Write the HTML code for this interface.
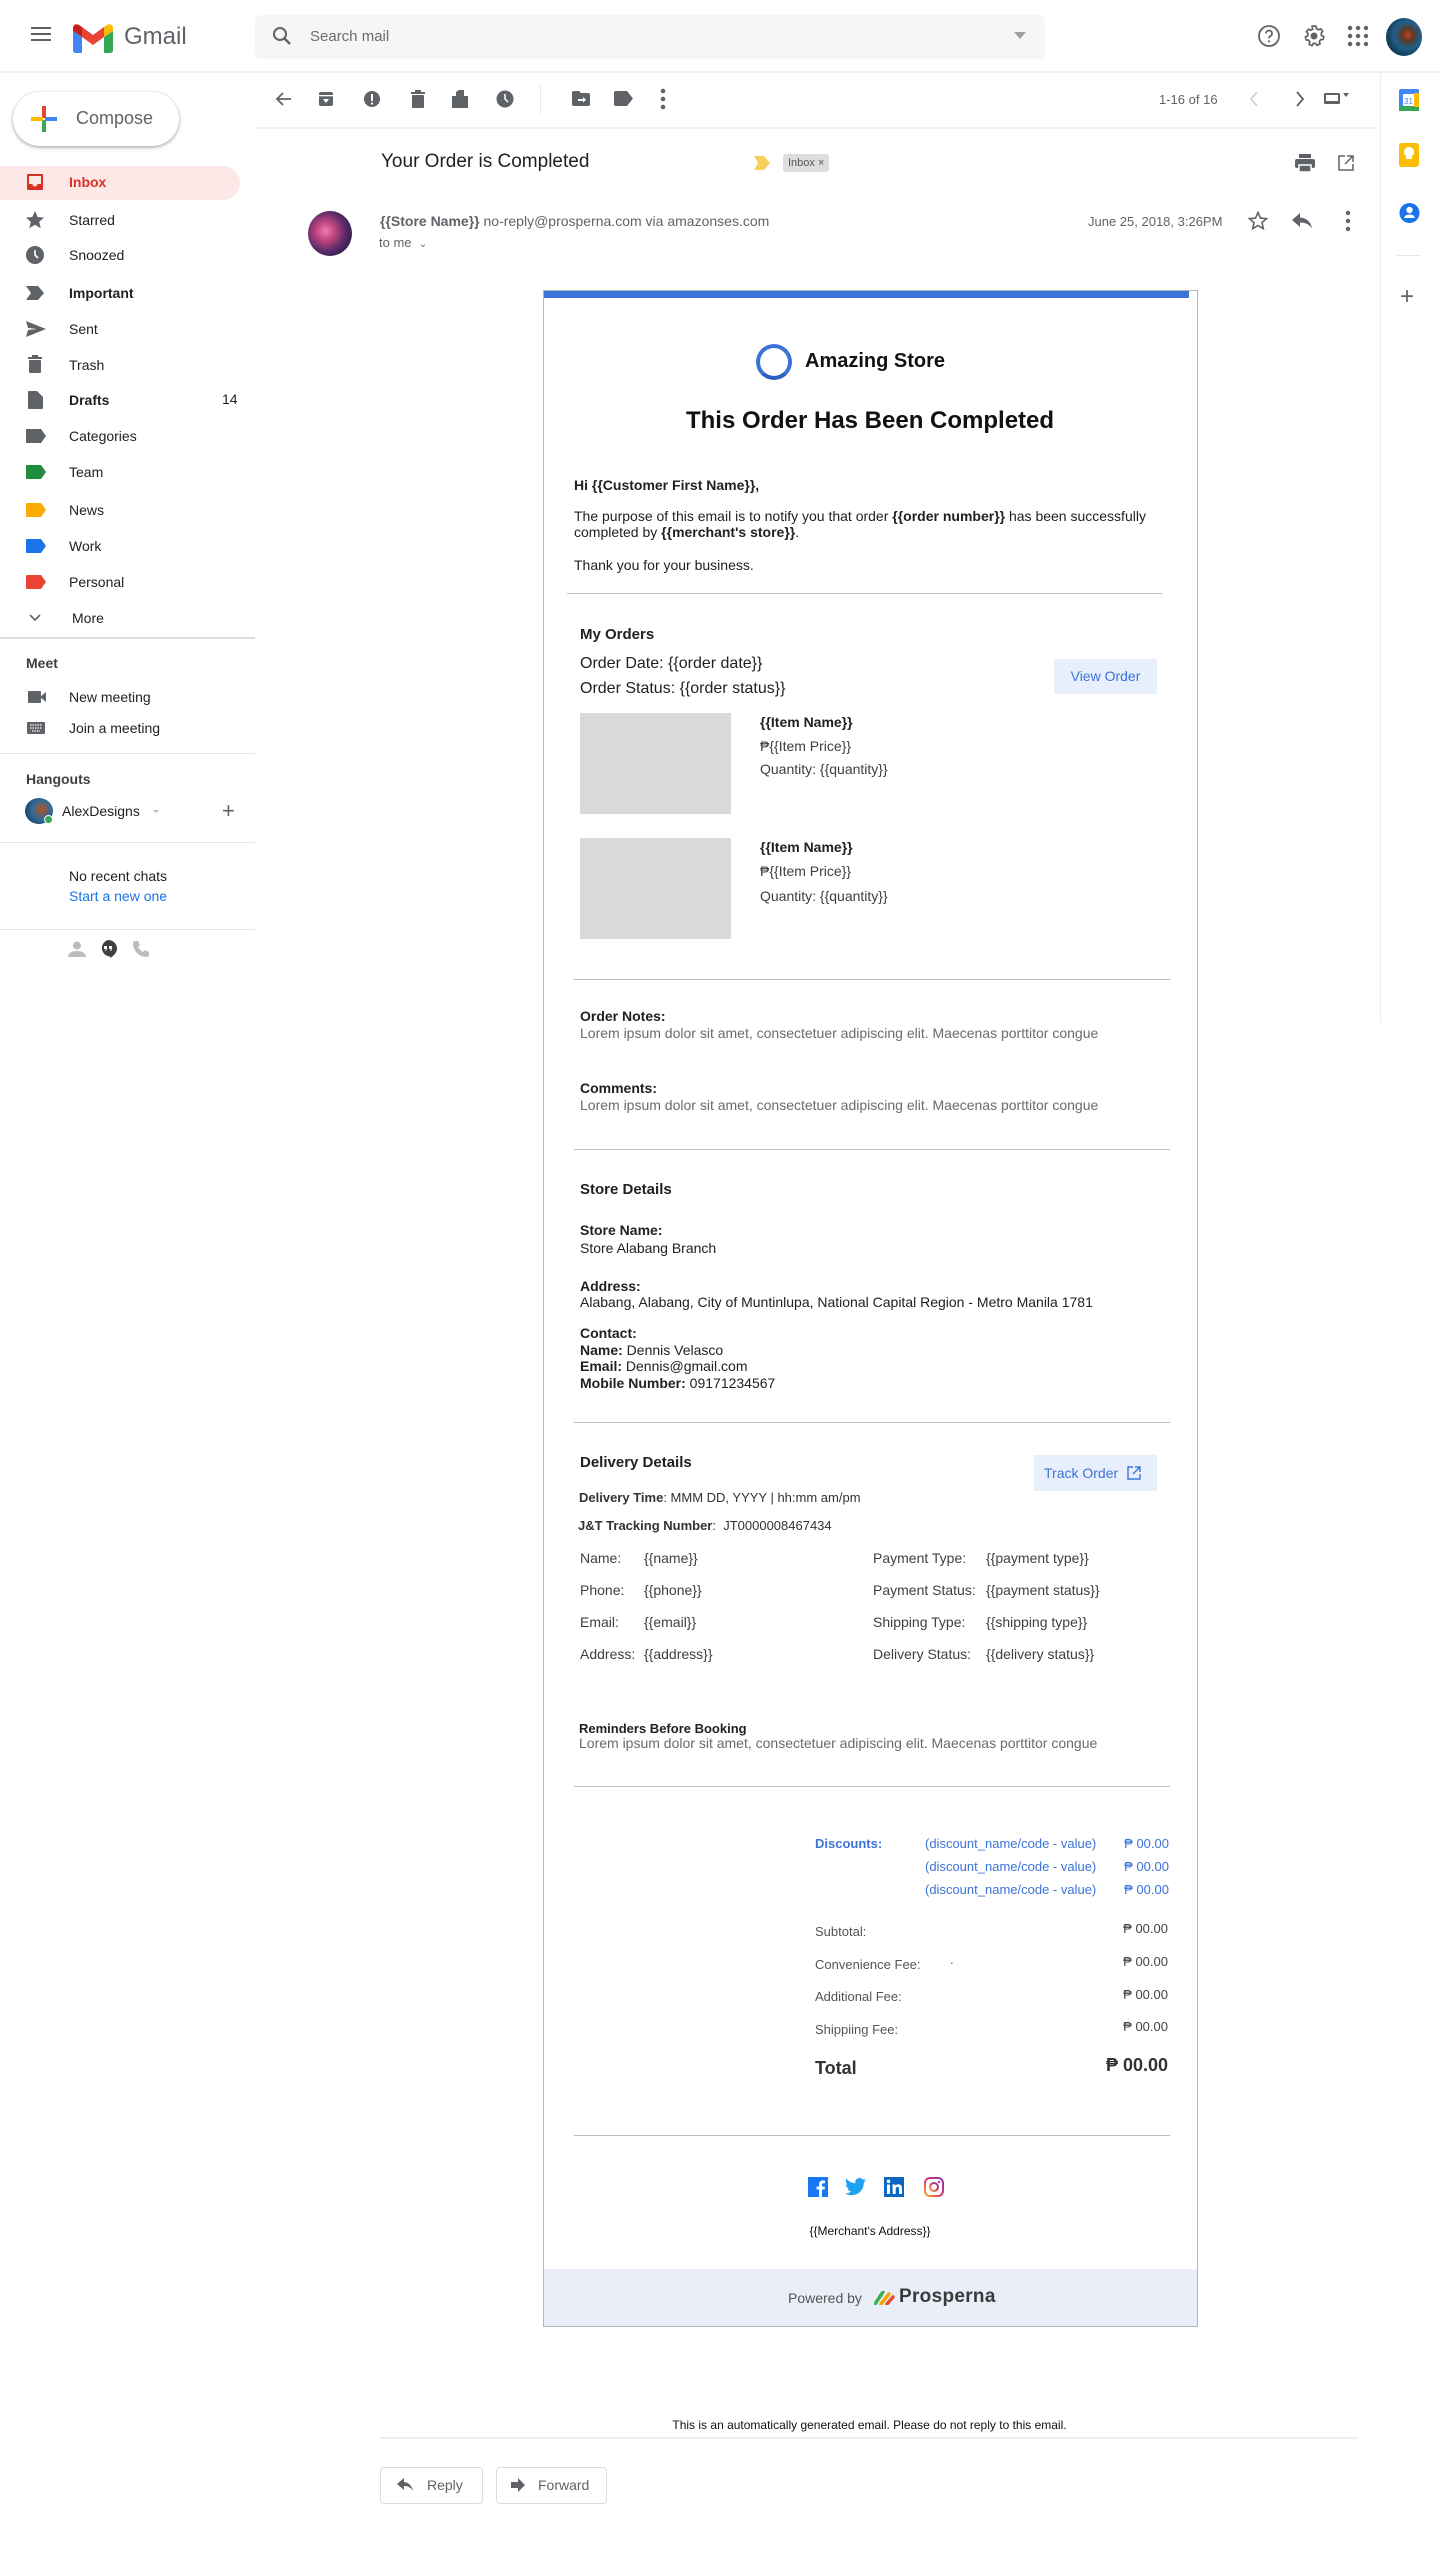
<!DOCTYPE html>
<html><head><meta charset="utf-8">
<style>
*{box-sizing:border-box;margin:0;padding:0}
body{width:1440px;height:2567px;position:relative;background:#fff;font-family:"Liberation Sans","DejaVu Sans",sans-serif;color:#202124;overflow:hidden}
.a{position:absolute;white-space:nowrap}
.nav{position:absolute;left:69px;font-size:14px;color:#202124;line-height:18px}
.ic{position:absolute}
.g{color:#5f6368}
.e{font-size:14px;line-height:17px}
.b{font-weight:bold}
.hr{position:absolute;height:1px;background:#bdbdbd}
.lab{color:#3c4043}
</style></head><body>

<!-- header -->
<div class="a" style="left:31px;top:27px;width:20px;height:2px;background:#5f6368;box-shadow:0 6px 0 #5f6368,0 12px 0 #5f6368"></div>
<svg class="ic" style="left:73px;top:23px" width="40" height="30" viewBox="0 0 40 30"><path d="M3 29V6l17 13L37 6v23" fill="none" stroke="#ea4335" stroke-width="0"/><path d="M0 8v19c0 1.5 1 3 3 3h6V14z" fill="#4285f4"/><path d="M31 30h6c2 0 3-1.5 3-3V8l-9 6z" fill="#34a853"/><path d="M9 14L20 22 31 14V4L20 12 9 4z" fill="#ea4335"/><path d="M0 8l9 6V4L6 2C3 0 0 2 0 5z" fill="#c5221f"/><path d="M31 4v10l9-6V5c0-3-3-5-6-3z" fill="#fbbc04"/></svg>
<div class="a" style="left:124px;top:23px;font-size:24px;color:#5f6368">Gmail</div>
<div class="a" style="left:255px;top:15px;width:790px;height:44px;background:#f6f6f6;border-radius:6px"></div>
<svg class="ic" style="left:272px;top:26px" width="20" height="20" viewBox="0 0 20 20"><circle cx="8" cy="8" r="6" fill="none" stroke="#5f6368" stroke-width="2"/><path d="M12.5 12.5L18 18" stroke="#5f6368" stroke-width="2.4"/></svg>
<div class="a" style="left:310px;top:28px;font-size:15px;color:#6b6b6b">Search mail</div>
<div class="a" style="left:1014px;top:32px;border-left:6px solid transparent;border-right:6px solid transparent;border-top:7px solid #9aa0a6"></div>
<svg class="ic" style="left:1257px;top:24px" width="24" height="24" viewBox="0 0 24 24"><circle cx="12" cy="12" r="10" fill="none" stroke="#5f6368" stroke-width="1.8"/><path d="M9 9.5a3 3 0 1 1 4 2.8c-.8.4-1 1-1 2" fill="none" stroke="#5f6368" stroke-width="1.8"/><circle cx="12" cy="17.3" r="1.1" fill="#5f6368"/></svg>
<svg class="ic" style="left:1302px;top:24px" width="24" height="24" viewBox="0 0 24 24"><path d="M12 2l2 .3.5 2.5 1.8 1 2.4-1 2 2.5-1.5 2 .3 2.2 2.3 1-.7 3-2.5.2-1.2 1.8.6 2.4-2.8 1.4-1.7-1.9h-2.1L10 21.7l-2.8-1.4.6-2.4-1.2-1.8-2.5-.2-.7-3 2.3-1 .3-2.2-1.5-2 2-2.5 2.4 1 1.8-1L10 2.3z" fill="none" stroke="#5f6368" stroke-width="1.7"/><circle cx="12" cy="12" r="3.5" fill="#5f6368"/></svg>
<svg class="ic" style="left:1347px;top:25px" width="22" height="22" viewBox="0 0 22 22" fill="#5f6368"><circle cx="3" cy="3" r="2.2"/><circle cx="11" cy="3" r="2.2"/><circle cx="19" cy="3" r="2.2"/><circle cx="3" cy="11" r="2.2"/><circle cx="11" cy="11" r="2.2"/><circle cx="19" cy="11" r="2.2"/><circle cx="3" cy="19" r="2.2"/><circle cx="11" cy="19" r="2.2"/><circle cx="19" cy="19" r="2.2"/></svg>
<div class="a" style="left:1386px;top:18px;width:36px;height:38px;border-radius:50%;background:radial-gradient(circle at 60% 45%,#c0441c 0,#5a3a2a 20%,#1f5f8a 45%,#0d2c45 80%)"></div>
<div class="a" style="left:0;top:71px;width:1440px;height:2px;background:#f1f1f1"></div>

<!-- sidebar -->
<div class="a" style="left:13px;top:92px;width:166px;height:54px;border-radius:27px;background:#fff;box-shadow:0 1px 3px rgba(0,0,0,.3),0 2px 6px rgba(0,0,0,.1)"></div>
<svg class="ic" style="left:30px;top:105px" width="28" height="28" viewBox="0 0 28 28"><rect x="12" y="1" width="4" height="12" fill="#ea4335"/><rect x="12" y="15" width="4" height="12" fill="#34a853"/><rect x="1" y="12" width="12" height="4" fill="#fbbc04"/><rect x="15" y="12" width="12" height="4" fill="#4285f4"/></svg>
<div class="a" style="left:76px;top:108px;font-size:18px;color:#5f6368">Compose</div>
<div class="a" style="left:0;top:166px;width:240px;height:34px;background:#fce8e6;border-radius:0 17px 17px 0"></div>
<svg class="ic" style="left:26px;top:173px" width="18" height="18" viewBox="0 0 18 18"><path d="M2 1h14a1 1 0 0 1 1 1v14a1 1 0 0 1-1 1H2a1 1 0 0 1-1-1V2a1 1 0 0 1 1-1zm1 2v8h3.5a2.5 2.5 0 0 0 5 0H15V3z" fill="#d93025"/></svg>
<div class="nav" style="top:173px;color:#d93025;font-weight:bold">Inbox</div>
<svg class="ic" style="left:25px;top:210px" width="20" height="20" viewBox="0 0 20 20"><path d="M10 1l2.7 6 6.3.6-4.8 4.2 1.5 6.3L10 14.8 4.3 18.1l1.5-6.3L1 7.6l6.3-.6z" fill="#5f6368"/></svg>
<div class="nav" style="top:211px">Starred</div>
<svg class="ic" style="left:25px;top:245px" width="20" height="20"><circle cx="10" cy="10" r="9" fill="#5f6368"/><path d="M10 5v5l3 3" stroke="#fff" stroke-width="1.6" fill="none"/></svg>
<div class="nav" style="top:246px">Snoozed</div>
<svg class="ic" style="left:26px;top:286px" width="18" height="14"><path d="M0 0h12l6 7-6 7H0l5-7z" fill="#5f6368"/></svg>
<div class="nav b" style="top:284px">Important</div>
<svg class="ic" style="left:26px;top:321px" width="20" height="16"><path d="M0 0l20 8L0 16l2-7 9-1-9-1z" fill="#5f6368"/></svg>
<div class="nav" style="top:320px">Sent</div>
<svg class="ic" style="left:28px;top:355px" width="14" height="18"><rect x="0" y="2" width="14" height="2" fill="#5f6368"/><rect x="4" y="0" width="6" height="2" fill="#5f6368"/><rect x="1" y="5" width="12" height="13" rx="1" fill="#5f6368"/></svg>
<div class="nav" style="top:356px">Trash</div>
<svg class="ic" style="left:28px;top:391px" width="15" height="18"><path d="M0 1a1 1 0 0 1 1-1h8l6 6v11a1 1 0 0 1-1 1H1a1 1 0 0 1-1-1z" fill="#5f6368"/></svg>
<div class="nav b" style="top:391px">Drafts</div>
<div class="a" style="left:222px;top:391px;font-size:14px">14</div>
<svg class="ic" style="left:26px;top:429px" width="20" height="14"><path d="M0 1a1 1 0 0 1 1-1h14l5 7-5 7H1a1 1 0 0 1-1-1z" fill="#5f6368"/></svg>
<div class="nav" style="top:427px">Categories</div>
<svg class="ic" style="left:26px;top:465px" width="20" height="14"><path d="M0 1a1 1 0 0 1 1-1h14l5 7-5 7H1a1 1 0 0 1-1-1z" fill="#1e8e3e"/></svg>
<div class="nav" style="top:463px">Team</div>
<svg class="ic" style="left:26px;top:503px" width="20" height="14"><path d="M0 1a1 1 0 0 1 1-1h14l5 7-5 7H1a1 1 0 0 1-1-1z" fill="#f9ab00"/></svg>
<div class="nav" style="top:501px">News</div>
<svg class="ic" style="left:26px;top:539px" width="20" height="14"><path d="M0 1a1 1 0 0 1 1-1h14l5 7-5 7H1a1 1 0 0 1-1-1z" fill="#1a73e8"/></svg>
<div class="nav" style="top:537px">Work</div>
<svg class="ic" style="left:26px;top:575px" width="20" height="14"><path d="M0 1a1 1 0 0 1 1-1h14l5 7-5 7H1a1 1 0 0 1-1-1z" fill="#ea4335"/></svg>
<div class="nav" style="top:573px">Personal</div>
<svg class="ic" style="left:29px;top:614px" width="12" height="8"><path d="M1 1l5 5 5-5" stroke="#5f6368" stroke-width="1.6" fill="none"/></svg>
<div class="nav" style="top:609px;left:72px">More</div>
<div class="a" style="left:0;top:637px;width:255px;height:2px;background:#ddd"></div>
<div class="a" style="left:26px;top:655px;font-size:14px;font-weight:bold;color:#3c4043">Meet</div>
<svg class="ic" style="left:28px;top:691px" width="18" height="12"><rect width="13" height="12" rx="1" fill="#5f6368"/><path d="M12 6l6-5v10z" fill="#5f6368"/></svg>
<div class="nav" style="top:688px">New meeting</div>
<svg class="ic" style="left:27px;top:722px" width="18" height="12"><rect width="18" height="12" rx="1" fill="#5f6368"/><path d="M3 3h12M3 6h12M5 9h8" stroke="#fff" stroke-width="1.2" stroke-dasharray="1.5 1"/></svg>
<div class="nav" style="top:719px">Join a meeting</div>
<div class="a" style="left:0;top:753px;width:255px;height:1px;background:#e6e6e6"></div>
<div class="a" style="left:26px;top:771px;font-size:14px;font-weight:bold;color:#3c4043">Hangouts</div>
<div class="a" style="left:25px;top:798px;width:28px;height:26px;border-radius:50%;background:radial-gradient(circle at 60% 45%,#b8501e 0,#2f6b9b 45%,#13354f 90%)"></div>
<div class="a" style="left:44px;top:815px;width:9px;height:9px;border-radius:50%;background:#34a853;border:1px solid #fff"></div>
<div class="nav" style="top:802px;left:62px">AlexDesigns</div>
<div class="a" style="left:153px;top:810px;border-left:3px solid transparent;border-right:3px solid transparent;border-top:3px solid #bbb"></div>
<div class="a" style="left:222px;top:798px;font-size:22px;color:#5f6368;font-weight:300">+</div>
<div class="a" style="left:0;top:842px;width:255px;height:1px;background:#e6e6e6"></div>
<div class="nav" style="top:867px">No recent chats</div>
<div class="nav" style="top:887px;color:#1a73e8">Start a new one</div>
<div class="a" style="left:0;top:929px;width:255px;height:1px;background:#e6e6e6"></div>
<svg class="ic" style="left:68px;top:941px" width="18" height="16"><circle cx="9" cy="4.5" r="4" fill="#bdbdbd"/><path d="M0 16c0-4 4-6 9-6s9 2 9 6z" fill="#bdbdbd"/></svg>
<svg class="ic" style="left:99px;top:940px" width="18" height="18"><path d="M9 0a9 8.5 0 0 1 9 8.5c0 5-5 8.5-7 9.5v-1.5A9 8.5 0 0 1 9 0z" fill="#3c4043"/><path d="M5 6h3v3l-1 2h-1l1-2H5zM10 6h3v3l-1 2h-1l1-2h-2z" fill="#fff"/></svg>
<svg class="ic" style="left:132px;top:940px" width="18" height="18"><path d="M3 1l3 0 2 4-2 2c1 2 3 4 5 5l2-2 4 2v3c0 1-1 2-2 2C7 17 1 11 1 3c0-1 1-2 2-2z" fill="#bdbdbd"/></svg>

<!-- toolbar -->
<svg class="ic" style="left:274px;top:91px" width="18" height="16"><path d="M17 8H3M9 2L3 8l6 6" stroke="#5f6368" stroke-width="1.8" fill="none"/></svg>
<svg class="ic" style="left:318px;top:91px" width="16" height="16"><rect x="1" y="1" width="14" height="14" rx="2" fill="#5f6368"/><rect x="1" y="4" width="14" height="1.3" fill="#fff"/><path d="M5 8h6l-3 4z" fill="#fff"/></svg>
<svg class="ic" style="left:363px;top:90px" width="18" height="18"><circle cx="9" cy="9" r="8" fill="#5f6368"/><rect x="8" y="4" width="2" height="7" fill="#fff"/><rect x="8" y="12.5" width="2" height="2" fill="#fff"/></svg>
<svg class="ic" style="left:411px;top:90px" width="14" height="18"><rect x="0" y="2" width="14" height="2" fill="#5f6368"/><rect x="4" y="0" width="6" height="2" fill="#5f6368"/><rect x="1" y="5" width="12" height="13" rx="1" fill="#5f6368"/></svg>
<svg class="ic" style="left:452px;top:90px" width="16" height="18"><path d="M0 6h4V2l3-2h5v6h4v12H0z" fill="#5f6368"/></svg>
<svg class="ic" style="left:496px;top:90px" width="18" height="18"><circle cx="9" cy="9" r="8.5" fill="#5f6368"/><path d="M9 4v5l3 3" stroke="#fff" stroke-width="1.5" fill="none"/></svg>
<div class="a" style="left:540px;top:84px;width:1px;height:30px;background:#e8e8e8"></div>
<svg class="ic" style="left:572px;top:91px" width="18" height="15"><path d="M0 2a2 2 0 0 1 2-2h5l2 2h7a2 2 0 0 1 2 2v9a2 2 0 0 1-2 2H2a2 2 0 0 1-2-2z" fill="#5f6368"/><path d="M6 8h5V6l3 2.8-3 2.8V10H6z" fill="#fff"/></svg>
<svg class="ic" style="left:614px;top:91px" width="20" height="15"><path d="M0 2a2 2 0 0 1 2-2h11l6 7.5-6 7.5H2a2 2 0 0 1-2-2z" fill="#5f6368"/></svg>
<svg class="ic" style="left:660px;top:88px" width="6" height="22" fill="#5f6368"><circle cx="3" cy="3" r="2.3"/><circle cx="3" cy="11" r="2.3"/><circle cx="3" cy="19" r="2.3"/></svg>
<div class="a" style="left:1159px;top:92px;font-size:13px;color:#5f6368">1-16 of 16</div>
<svg class="ic" style="left:1249px;top:91px" width="10" height="16"><path d="M8 1L2 8l6 7" stroke="#ccc" stroke-width="1.6" fill="none"/></svg>
<svg class="ic" style="left:1295px;top:91px" width="10" height="16"><path d="M2 1l6 7-6 7" stroke="#5f6368" stroke-width="1.8" fill="none"/></svg>
<svg class="ic" style="left:1323px;top:91px" width="26" height="14"><rect x="1" y="2" width="16" height="11" rx="1" fill="#5f6368"/><rect x="3" y="4" width="12" height="6" fill="#fff"/><path d="M20 2h6l-3 4z" fill="#5f6368"/></svg>
<div class="a" style="left:255px;top:127px;width:1121px;height:2px;background:#f1f1f1"></div>

<!-- right rail -->
<div class="a" style="left:1380px;top:73px;width:1px;height:950px;background:#eee"></div>
<svg class="ic" style="left:1399px;top:89px" width="20" height="22"><rect width="20" height="22" rx="2" fill="#4285f4"/><rect x="0" y="17" width="20" height="5" fill="#34a853"/><rect x="15" y="4" width="5" height="14" fill="#fbbc04"/><rect x="4" y="5" width="11" height="12" fill="#fff"/><text x="5" y="15" font-size="8" fill="#4285f4" font-family="Liberation Sans">31</text></svg>
<svg class="ic" style="left:1399px;top:143px" width="20" height="24"><rect width="20" height="24" rx="3" fill="#fbbc04"/><path d="M10 4a5 5 0 0 0-3 9v3h6v-3a5 5 0 0 0-3-9z" fill="#fff"/></svg>
<svg class="ic" style="left:1399px;top:202px" width="21" height="22"><circle cx="10.5" cy="11" r="10" fill="#1a73e8"/><circle cx="10.5" cy="8" r="3.2" fill="#fff"/><path d="M5 16c1-3 3-3.5 5.5-3.5S15 13 16 16z" fill="#fff"/></svg>
<div class="a" style="left:1397px;top:255px;width:24px;height:1px;background:#e6e6e6"></div>
<div class="a" style="left:1400px;top:283px;font-size:24px;color:#5f6368;font-weight:300">+</div>

<!-- subject -->
<div class="a" style="left:381px;top:151px;font-size:19px;color:#202124">Your Order is Completed</div>
<svg class="ic" style="left:754px;top:156px" width="16" height="14"><path d="M0 0h10l6 7-6 7H0l4-7z" fill="#f6cf5d"/></svg>
<div class="a" style="left:783px;top:154px;height:18px;padding:0 5px;background:#ddd;border-radius:3px;font-size:11px;line-height:18px;color:#555">Inbox ×</div>
<svg class="ic" style="left:1295px;top:154px" width="20" height="18"><rect x="4" y="0" width="12" height="4" fill="#5f6368"/><rect x="0" y="5" width="20" height="9" rx="2" fill="#5f6368"/><rect x="4" y="11" width="12" height="7" fill="#5f6368" stroke="#fff" stroke-width="1.5"/></svg>
<svg class="ic" style="left:1338px;top:155px" width="16" height="16"><path d="M7 1H1v14h14V9" stroke="#5f6368" stroke-width="1.5" fill="none"/><path d="M9 1h6v6M15 1L7 9" stroke="#5f6368" stroke-width="1.5" fill="none"/></svg>

<!-- sender -->
<div class="a" style="left:308px;top:211px;width:44px;height:45px;border-radius:50%;background:radial-gradient(circle at 40% 45%,#ee7fb5 0,#c2467e 25%,#5a2a6a 55%,#1d1d40 85%)"></div>
<div class="a" style="left:380px;top:213px;font-size:14px;color:#5f6368"><b style="color:#5f6368">{{Store Name}}</b> no-reply@prosperna.com via amazonses.com</div>
<div class="a" style="left:379px;top:235px;font-size:13px;color:#5f6368">to me&nbsp;&nbsp;<span style="font-size:10px">⌄</span></div>
<div class="a" style="left:1088px;top:214px;font-size:13px;color:#5f6368">June 25, 2018, 3:26PM</div>
<svg class="ic" style="left:1248px;top:211px" width="20" height="20"><path d="M10 1.5l2.5 5.6 6 .6-4.5 4 1.3 6L10 14.6l-5.3 3.1 1.3-6-4.5-4 6-.6z" stroke="#5f6368" stroke-width="1.6" fill="none"/></svg>
<svg class="ic" style="left:1292px;top:213px" width="20" height="16"><path d="M8 0L0 7l8 7V9.5c5 0 9 1.5 12 6-1-6-5-10.5-12-11z" fill="#5f6368"/></svg>
<svg class="ic" style="left:1345px;top:210px" width="6" height="22" fill="#5f6368"><circle cx="3" cy="3" r="2.2"/><circle cx="3" cy="11" r="2.2"/><circle cx="3" cy="19" r="2.2"/></svg>

<!-- email card -->
<div class="a" style="left:543px;top:290px;width:655px;height:2037px;border:1px solid #b5b5b5;background:#fff"></div>
<div class="a" style="left:544px;top:291px;width:645px;height:7px;background:#3b73d9"></div>
<div class="a" style="left:756px;top:344px;width:36px;height:36px;border-radius:50%;border:4px solid #3b73d9;border-bottom-color:#2d5fc2"></div>
<div class="a b" style="left:805px;top:350px;font-size:20px;color:#111">Amazing Store</div>
<div class="a b" style="left:544px;top:407px;width:652px;text-align:center;font-size:24px;color:#111">This Order Has Been Completed</div>
<div class="a e b" style="left:574px;top:477px">Hi {{Customer First Name}},</div>
<div class="a e" style="left:574px;top:508px">The purpose of this email is to notify you that order <b>{{order number}}</b> has been successfully</div>
<div class="a e" style="left:574px;top:524px">completed by <b>{{merchant's store}}</b>.</div>
<div class="a e" style="left:574px;top:557px">Thank you for your business.</div>
<div class="hr" style="left:567px;top:593px;width:595px"></div>

<div class="a b" style="left:580px;top:626px;font-size:15px">My Orders</div>
<div class="a" style="left:580px;top:655px;font-size:16px">Order Date: {{order date}}</div>
<div class="a" style="left:580px;top:680px;font-size:16px">Order Status: {{order status}}</div>
<div class="a" style="left:1054px;top:659px;width:103px;height:35px;background:#e8effc;color:#3b73d9;font-size:14px;line-height:35px;text-align:center">View Order</div>
<div class="a" style="left:580px;top:713px;width:151px;height:101px;background:#d9d9d9"></div>
<div class="a e b" style="left:760px;top:714px">{{Item Name}}</div>
<div class="a e lab" style="left:760px;top:738px">₱{{Item Price}}</div>
<div class="a e lab" style="left:760px;top:761px">Quantity: {{quantity}}</div>
<div class="a" style="left:580px;top:838px;width:151px;height:101px;background:#d9d9d9"></div>
<div class="a e b" style="left:760px;top:839px">{{Item Name}}</div>
<div class="a e lab" style="left:760px;top:863px">₱{{Item Price}}</div>
<div class="a e lab" style="left:760px;top:888px">Quantity: {{quantity}}</div>
<div class="hr" style="left:574px;top:979px;width:596px"></div>

<div class="a e b" style="left:580px;top:1008px">Order Notes:</div>
<div class="a e" style="left:580px;top:1025px;color:#6b6b6b">Lorem ipsum dolor sit amet, consectetuer adipiscing elit. Maecenas porttitor congue</div>
<div class="a e b" style="left:580px;top:1080px">Comments:</div>
<div class="a e" style="left:580px;top:1097px;color:#6b6b6b">Lorem ipsum dolor sit amet, consectetuer adipiscing elit. Maecenas porttitor congue</div>
<div class="hr" style="left:574px;top:1149px;width:596px"></div>

<div class="a b" style="left:580px;top:1181px;font-size:15px">Store Details</div>
<div class="a e b" style="left:580px;top:1222px">Store Name:</div>
<div class="a e" style="left:580px;top:1240px">Store Alabang Branch</div>
<div class="a e b" style="left:580px;top:1278px">Address:</div>
<div class="a e" style="left:580px;top:1294px">Alabang, Alabang, City of Muntinlupa, National Capital Region - Metro Manila 1781</div>
<div class="a e b" style="left:580px;top:1325px">Contact:</div>
<div class="a e" style="left:580px;top:1342px"><b>Name:</b> Dennis Velasco</div>
<div class="a e" style="left:580px;top:1358px"><b>Email:</b> Dennis@gmail.com</div>
<div class="a e" style="left:580px;top:1375px"><b>Mobile Number:</b> 09171234567</div>
<div class="hr" style="left:574px;top:1422px;width:596px"></div>

<div class="a b" style="left:580px;top:1454px;font-size:15px">Delivery Details</div>
<div class="a" style="left:1034px;top:1455px;width:123px;height:36px;background:#e8effc;color:#3b73d9;font-size:14px;line-height:36px;padding-left:10px">Track Order
<svg style="position:absolute;left:93px;top:11px" width="14" height="14"><path d="M6 1H1v12h12V8" stroke="#3b73d9" stroke-width="1.4" fill="none"/><path d="M8 1h5v5M13 1L6 8" stroke="#3b73d9" stroke-width="1.4" fill="none"/></svg></div>
<div class="a" style="left:579px;top:1490px;font-size:13px;color:#333"><b>Delivery Time</b>: MMM DD, YYYY | hh:mm am/pm</div>
<div class="a" style="left:578px;top:1518px;font-size:13px;color:#333"><b>J&amp;T Tracking Number</b>:&nbsp; JT0000008467434</div>
<div class="a e lab" style="left:580px;top:1550px">Name:</div><div class="a e lab" style="left:644px;top:1550px">{{name}}</div>
<div class="a e lab" style="left:580px;top:1582px">Phone:</div><div class="a e lab" style="left:644px;top:1582px">{{phone}}</div>
<div class="a e lab" style="left:580px;top:1614px">Email:</div><div class="a e lab" style="left:644px;top:1614px">{{email}}</div>
<div class="a e lab" style="left:580px;top:1646px">Address:</div><div class="a e lab" style="left:644px;top:1646px">{{address}}</div>
<div class="a e lab" style="left:873px;top:1550px">Payment Type:</div><div class="a e lab" style="left:986px;top:1550px">{{payment type}}</div>
<div class="a e lab" style="left:873px;top:1582px">Payment Status:</div><div class="a e lab" style="left:986px;top:1582px">{{payment status}}</div>
<div class="a e lab" style="left:873px;top:1614px">Shipping Type:</div><div class="a e lab" style="left:986px;top:1614px">{{shipping type}}</div>
<div class="a e lab" style="left:873px;top:1646px">Delivery Status:</div><div class="a e lab" style="left:986px;top:1646px">{{delivery status}}</div>

<div class="a e b" style="left:579px;top:1720px;font-size:13px">Reminders Before Booking</div>
<div class="a e" style="left:579px;top:1735px;color:#6b6b6b">Lorem ipsum dolor sit amet, consectetuer adipiscing elit. Maecenas porttitor congue</div>
<div class="hr" style="left:574px;top:1786px;width:596px"></div>

<div class="a b" style="left:815px;top:1836px;font-size:13px;color:#3b73d9">Discounts:</div>
<div class="a" style="left:925px;top:1836px;font-size:13px;color:#3b73d9">(discount_name/code - value)</div>
<div class="a" style="left:925px;top:1859px;font-size:13px;color:#3b73d9">(discount_name/code - value)</div>
<div class="a" style="left:925px;top:1882px;font-size:13px;color:#3b73d9">(discount_name/code - value)</div>
<div class="a" style="right:271px;top:1836px;font-size:13px;color:#3b73d9">₱ 00.00</div>
<div class="a" style="right:271px;top:1859px;font-size:13px;color:#3b73d9">₱ 00.00</div>
<div class="a" style="right:271px;top:1882px;font-size:13px;color:#3b73d9">₱ 00.00</div>
<div class="a" style="left:815px;top:1924px;font-size:13px;color:#555">Subtotal:</div>
<div class="a" style="left:815px;top:1957px;font-size:13px;color:#555">Convenience Fee:</div>
<div class="a" style="left:950px;top:1952px;font-size:13px;color:#555">.</div>
<div class="a" style="left:815px;top:1989px;font-size:13px;color:#555">Additional Fee:</div>
<div class="a" style="left:815px;top:2022px;font-size:13px;color:#555">Shippiing Fee:</div>
<div class="a" style="right:272px;top:1921px;font-size:13px;color:#444">₱ 00.00</div>
<div class="a" style="right:272px;top:1954px;font-size:13px;color:#444">₱ 00.00</div>
<div class="a" style="right:272px;top:1987px;font-size:13px;color:#444">₱ 00.00</div>
<div class="a" style="right:272px;top:2019px;font-size:13px;color:#444">₱ 00.00</div>
<div class="a b" style="left:815px;top:2058px;font-size:18px;color:#333">Total</div>
<div class="a b" style="right:272px;top:2055px;font-size:18px;color:#333">₱ 00.00</div>
<div class="hr" style="left:574px;top:2135px;width:596px"></div>

<svg class="ic" style="left:808px;top:2177px" width="20" height="20"><rect width="20" height="20" fill="#1877f2"/><path d="M14 20v-7.5h2.5l.4-3H14V7.7c0-.9.3-1.4 1.5-1.4H17V3.6c-.3 0-1.2-.1-2.2-.1-2.2 0-3.7 1.3-3.7 3.8v2.2H8.6v3h2.5V20z" fill="#fff"/></svg>
<svg class="ic" style="left:845px;top:2178px" width="21" height="18"><path d="M21 2.2c-.8.3-1.6.6-2.5.7.9-.6 1.6-1.4 1.9-2.4-.8.5-1.8.8-2.7 1C16.9.6 15.8 0 14.5 0c-2.4 0-4.3 1.9-4.3 4.3 0 .3 0 .7.1 1C6.7 5.1 3.5 3.4 1.4.8 1 1.4.8 2.2.8 3c0 1.5.8 2.8 1.9 3.6-.7 0-1.4-.2-1.9-.5 0 2.1 1.5 3.8 3.5 4.2-.4.1-.8.2-1.1.2-.3 0-.5 0-.8-.1.5 1.7 2.1 3 4 3-1.5 1.2-3.3 1.9-5.3 1.9H0c1.9 1.2 4.2 1.9 6.6 1.9 7.9 0 12.2-6.5 12.2-12.2v-.6c.9-.6 1.6-1.4 2.2-2.2z" fill="#1da1f2"/></svg>
<svg class="ic" style="left:884px;top:2177px" width="20" height="20"><rect width="20" height="20" fill="#0a66c2"/><rect x="3" y="7.5" width="3" height="9.5" fill="#fff"/><circle cx="4.5" cy="4.3" r="1.8" fill="#fff"/><path d="M8.5 7.5h2.9v1.3c.4-.8 1.5-1.6 3-1.6 3 0 3.6 2 3.6 4.6V17h-3v-4.6c0-1.1 0-2.5-1.5-2.5s-1.8 1.2-1.8 2.4V17h-3z" fill="#fff"/></svg>
<svg class="ic" style="left:924px;top:2177px" width="20" height="20"><defs><linearGradient id="ig" x1="0" y1="1" x2="1" y2="0"><stop offset="0" stop-color="#f9a826"/><stop offset=".5" stop-color="#e1306c"/><stop offset="1" stop-color="#833ab4"/></linearGradient></defs><rect x="1" y="1" width="18" height="18" rx="5" fill="none" stroke="url(#ig)" stroke-width="2"/><circle cx="10" cy="10" r="4" fill="none" stroke="url(#ig)" stroke-width="2"/><circle cx="15" cy="5" r="1.2" fill="#c13584"/></svg>
<div class="a" style="left:544px;top:2224px;width:652px;text-align:center;font-size:12px;color:#111">{{Merchant's Address}}</div>
<div class="a" style="left:544px;top:2269px;width:653px;height:57px;background:#e9eef8"></div>
<div class="a" style="left:788px;top:2290px;font-size:14px;color:#555">Powered by</div>
<svg class="ic" style="left:874px;top:2291px" width="22" height="14"><path d="M1 13L9 1" stroke="#3fae4f" stroke-width="3.5" stroke-linecap="round"/><path d="M7 13L15 3" stroke="#f7a600" stroke-width="3.5" stroke-linecap="round"/><path d="M13 13L19 6" stroke="#e94b3c" stroke-width="3.5" stroke-linecap="round"/></svg>
<div class="a" style="left:899px;top:2286px;font-size:19px;font-weight:bold;color:#3a3a3a;letter-spacing:.3px">Prosperna</div>

<!-- bottom -->
<div class="a" style="left:381px;top:2418px;width:977px;text-align:center;font-size:12px;color:#111">This is an automatically generated email. Please do not reply to this email.</div>
<div class="a" style="left:380px;top:2437px;width:978px;height:2px;background:#eceff1"></div>
<div class="a" style="left:380px;top:2467px;width:103px;height:37px;border:1px solid #dadce0;border-radius:4px;font-size:14px;line-height:35px;color:#5f6368;padding-left:46px">Reply</div>
<svg class="ic" style="left:397px;top:2478px" width="16" height="14"><path d="M7 0L0 6l7 6V8c4 0 7 1.5 9 5-1-5-4-8.5-9-9z" fill="#5f6368"/></svg>
<div class="a" style="left:496px;top:2467px;width:111px;height:37px;border:1px solid #dadce0;border-radius:4px;font-size:14px;line-height:35px;color:#5f6368;padding-left:41px">Forward</div>
<svg class="ic" style="left:511px;top:2478px" width="14" height="14"><path d="M0 4h7V0l7 7-7 7v-4H0z" fill="#5f6368"/></svg>
</body></html>
